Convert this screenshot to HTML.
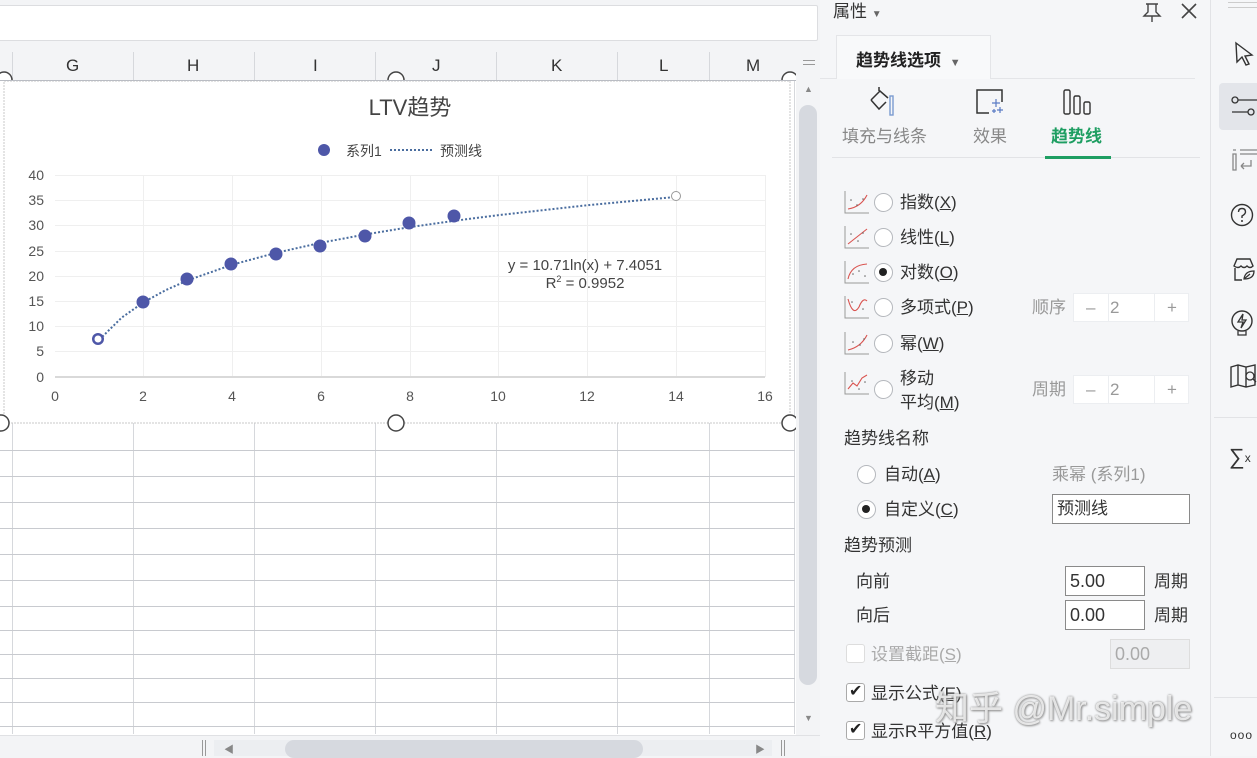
<!DOCTYPE html>
<html><head><meta charset="utf-8"><style>
*{margin:0;padding:0;box-sizing:border-box}
body{width:1257px;height:756px;overflow:hidden;background:#f3f4f6;font-family:"Liberation Sans","Noto Sans CJK SC",sans-serif;position:relative;color:#333}
.a{position:absolute;white-space:nowrap}
.t{font-size:17px;line-height:20px}
.g{color:#999}
.rad{position:absolute;width:19px;height:19px;border:1.5px solid #b5b8bd;border-radius:50%;background:#fff}
.rad.on::after{content:"";position:absolute;left:4px;top:4px;width:8px;height:8px;border-radius:50%;background:#222}
.spin{position:absolute;width:116px;height:29px;background:#fff;border:1px solid #eceef1;font-size:17px;color:#999}
.spin span{position:absolute;top:4px}
.inp{position:absolute;background:#fff;border:1px solid #8a8a8a;font-size:18px;padding:3px 4px;line-height:22px}
.chk{position:absolute;width:19px;height:19px;border:1.5px solid #aaa;border-radius:3px;background:#fff}
</style></head><body>
<!-- formula bar -->
<div class="a" style="left:-2px;top:5px;width:820px;height:36px;background:#fff;border:1px solid #dcdde0;border-radius:2px"></div>
<!-- grid -->
<div class="a" style="left:0;top:80px;width:796px;height:655px;background:#fff"></div>
<svg class="a" style="left:0;top:52px" width="800" height="684">
<g stroke="#d6d8dc" stroke-width="1">
<line x1="12.5" y1="0" x2="12.5" y2="682"/><line x1="133.5" y1="0" x2="133.5" y2="682"/><line x1="254.5" y1="0" x2="254.5" y2="682"/><line x1="375.5" y1="0" x2="375.5" y2="682"/><line x1="496.5" y1="0" x2="496.5" y2="682"/><line x1="617.5" y1="0" x2="617.5" y2="682"/><line x1="709.5" y1="0" x2="709.5" y2="682"/><line x1="794.5" y1="0" x2="794.5" y2="682"/>
</g>
<g stroke="#c8cacf" stroke-width="1">
<line x1="0" y1="398.5" x2="795" y2="398.5"/><line x1="0" y1="424.5" x2="795" y2="424.5"/><line x1="0" y1="450.5" x2="795" y2="450.5"/><line x1="0" y1="476.5" x2="795" y2="476.5"/><line x1="0" y1="502.5" x2="795" y2="502.5"/><line x1="0" y1="528.5" x2="795" y2="528.5"/><line x1="0" y1="554.5" x2="795" y2="554.5"/><line x1="0" y1="578.5" x2="795" y2="578.5"/><line x1="0" y1="602.5" x2="795" y2="602.5"/><line x1="0" y1="626.5" x2="795" y2="626.5"/><line x1="0" y1="650.5" x2="795" y2="650.5"/><line x1="0" y1="674.5" x2="795" y2="674.5"/>
</g>
</svg>
<!-- chart -->
<svg class="a" style="left:0;top:70px" width="800" height="370" viewBox="0 70 800 370">
<rect x="4" y="81" width="786" height="342" fill="#fff" stroke="#c9c9c9" stroke-dasharray="2 1"/>
<text x="410" y="115" font-size="22" fill="#444" text-anchor="middle" font-family="Liberation Sans,Noto Sans CJK SC,sans-serif">LTV趋势</text>
<circle cx="324" cy="150" r="6" fill="#4e57a8"/>
<text x="346" y="156" font-size="14" fill="#444" font-family="Liberation Sans,Noto Sans CJK SC,sans-serif">系列1</text>
<line x1="390" y1="150" x2="434" y2="150" stroke="#4a6d9f" stroke-width="2" stroke-dasharray="2 2"/>
<text x="440" y="156" font-size="14" fill="#444" font-family="Liberation Sans,Noto Sans CJK SC,sans-serif">预测线</text>
<g stroke="#efefef" stroke-width="1">
<line x1="55" y1="175.5" x2="765" y2="175.5"/><line x1="55" y1="200.5" x2="765" y2="200.5"/><line x1="55" y1="225.5" x2="765" y2="225.5"/><line x1="55" y1="251.5" x2="765" y2="251.5"/><line x1="55" y1="276.5" x2="765" y2="276.5"/><line x1="55" y1="301.5" x2="765" y2="301.5"/><line x1="55" y1="326.5" x2="765" y2="326.5"/><line x1="55" y1="351.5" x2="765" y2="351.5"/>
<line x1="143.5" y1="175" x2="143.5" y2="377"/><line x1="232.5" y1="175" x2="232.5" y2="377"/><line x1="321.5" y1="175" x2="321.5" y2="377"/><line x1="410.5" y1="175" x2="410.5" y2="377"/><line x1="498.5" y1="175" x2="498.5" y2="377"/><line x1="587.5" y1="175" x2="587.5" y2="377"/><line x1="676.5" y1="175" x2="676.5" y2="377"/><line x1="765.5" y1="175" x2="765.5" y2="377"/>
</g>
<line x1="55" y1="377" x2="765" y2="377" stroke="#d9d9d9" stroke-width="2"/>
<g font-size="14" fill="#555" font-family="Liberation Sans,sans-serif" text-anchor="end">
<text x="44" y="180">40</text><text x="44" y="205">35</text><text x="44" y="230">30</text><text x="44" y="256">25</text><text x="44" y="281">20</text><text x="44" y="306">15</text><text x="44" y="331">10</text><text x="44" y="356">5</text><text x="44" y="382">0</text>
</g>
<g font-size="14" fill="#555" font-family="Liberation Sans,sans-serif" text-anchor="middle">
<text x="55" y="401">0</text><text x="143" y="401">2</text><text x="232" y="401">4</text><text x="321" y="401">6</text><text x="410" y="401">8</text><text x="498" y="401">10</text><text x="587" y="401">12</text><text x="676" y="401">14</text><text x="765" y="401">16</text>
</g>
<path d="M99.4 339.6 L121.6 317.7 L143.75 302.1 L166 290 L188.1 280.2 L232.5 264.6 L276.9 252.6 L321.3 242.7 L365.6 234.4 L410 227.1 L454.4 220.8 L498.8 215.1 L587.5 205.2 L676.3 196.9" fill="none" stroke="#4a6d9f" stroke-width="2" stroke-dasharray="2 2"/>
<g fill="#4e57a8">
<circle cx="143" cy="302" r="6.5"/><circle cx="187" cy="279" r="6.5"/><circle cx="231" cy="264" r="6.5"/><circle cx="276" cy="254" r="6.5"/><circle cx="320" cy="246" r="6.5"/><circle cx="365" cy="236" r="6.5"/><circle cx="409" cy="223" r="6.5"/><circle cx="454" cy="216" r="6.5"/>
</g>
<circle cx="98" cy="339" r="6" fill="#4e57a8"/><circle cx="98" cy="339" r="3.5" fill="#fff"/>
<circle cx="676" cy="196" r="4.5" fill="#fff" stroke="#999"/>
<text x="585" y="270" font-size="15" fill="#444" text-anchor="middle" font-family="Liberation Sans,sans-serif">y = 10.71ln(x) + 7.4051</text>
<text x="585" y="288" font-size="15" fill="#444" text-anchor="middle" font-family="Liberation Sans,sans-serif">R<tspan dy="-6" font-size="9">2</tspan><tspan dy="6"> = 0.9952</tspan></text>
<g fill="#fff" stroke="#444" stroke-width="1.5">
<circle cx="396" cy="423" r="8"/><circle cx="1" cy="423" r="8"/><circle cx="790" cy="423" r="8"/>
</g>
</svg>
<!-- column header (over chart top) -->
<div class="a" style="left:0;top:52px;width:796px;height:28px;background:#f3f4f6"></div>
<svg class="a" style="left:0;top:52px" width="800" height="36"><g stroke="#d6d8dc"><line x1="12.5" y1="0" x2="12.5" y2="28"/><line x1="133.5" y1="0" x2="133.5" y2="28"/><line x1="254.5" y1="0" x2="254.5" y2="28"/><line x1="375.5" y1="0" x2="375.5" y2="28"/><line x1="496.5" y1="0" x2="496.5" y2="28"/><line x1="617.5" y1="0" x2="617.5" y2="28"/><line x1="709.5" y1="0" x2="709.5" y2="28"/></g><line x1="0" y1="28.5" x2="796" y2="28.5" stroke="#b9bcc3"/>
<g fill="#fff" stroke="#444" stroke-width="1.5"><path d="M-4 28 A8 8 0 0 1 12 28"/><path d="M388 28 A8 8 0 0 1 404 28"/><path d="M782 28 A8 8 0 0 1 798 28"/></g></svg>
<div class="a" style="left:0;top:52px;width:796px;height:28px;font-size:17px;color:#333">
<span class="a" style="left:66px;top:4px">G</span><span class="a" style="left:187px;top:4px">H</span><span class="a" style="left:313px;top:4px">I</span><span class="a" style="left:432px;top:4px">J</span><span class="a" style="left:551px;top:4px">K</span><span class="a" style="left:659px;top:4px">L</span><span class="a" style="left:746px;top:4px">M</span>
</div>
<!-- vertical scrollbar -->
<div class="a" style="left:796px;top:52px;width:24px;height:684px;background:#f3f4f6"></div>
<div class="a" style="left:803px;top:60px;width:12px;height:5px;border-top:1px solid #999;border-bottom:1px solid #999"></div>
<div class="a" style="left:804px;top:84px;font-size:9px;color:#888">▲</div>
<div class="a" style="left:799px;top:105px;width:18px;height:580px;background:#d6d9df;border-radius:9px"></div>
<div class="a" style="left:804px;top:713px;font-size:9px;color:#888">▼</div>
<!-- bottom bar -->
<div class="a" style="left:0;top:735px;width:820px;height:21px;background:#f3f4f6;border-top:1px solid #e0e1e4"></div>
<div class="a" style="left:202px;top:740px;width:4px;height:16px;border-left:1px solid #999;border-right:1px solid #999"></div>
<div class="a" style="left:214px;top:740px;width:558px;height:16px;background:#eceef1"></div>
<div class="a" style="left:285px;top:740px;width:358px;height:18px;background:#d6d9df;border-radius:9px"></div>
<div class="a" style="left:224px;top:741px;font-size:10px;color:#888">◀</div>
<div class="a" style="left:755px;top:741px;font-size:10px;color:#888">▶</div>
<div class="a" style="left:781px;top:740px;width:4px;height:16px;border-left:1px solid #999;border-right:1px solid #999"></div>

<!-- right panel -->
<div class="a" style="left:820px;top:0;width:390px;height:756px;background:#f5f6f8"></div>
<div class="a t" style="left:833px;top:2px">属性 <span style="font-size:10px;color:#666">▼</span></div>
<svg class="a" style="left:1140px;top:0" width="60" height="24"><path d="M6 4 H18 M8 4 L8 12 L4 16 H20 L16 12 L16 4 M12 16 V22" fill="none" stroke="#444" stroke-width="1.4"/><path d="M42 4 L56 18 M56 4 L42 18" stroke="#444" stroke-width="1.6"/></svg>
<div class="a" style="left:836px;top:35px;width:155px;height:44px;background:#f8f9fa;border:1px solid #e4e5e8;border-bottom:none"></div>
<div class="a" style="left:820px;top:78px;width:16px;border-top:1px solid #e4e5e8"></div>
<div class="a" style="left:990px;top:78px;width:205px;border-top:1px solid #e4e5e8"></div>
<div class="a" style="left:856px;top:46px;font-size:17px;font-weight:bold;color:#222">趋势线选项 <span style="font-size:11px;color:#666;margin-left:4px">▼</span></div>
<svg class="a" style="left:866px;top:86px" width="40" height="32"><path d="M5 14 L14 5 L22 12 M5 14 L13 23 L20 16" fill="none" stroke="#333" stroke-width="1.5"/><path d="M13 5 V1" stroke="#333" stroke-width="1.5"/><rect x="24" y="10" width="3" height="19" fill="none" stroke="#7a9bd0" stroke-width="1.4"/></svg>
<svg class="a" style="left:975px;top:88px" width="34" height="28"><path d="M27 14 V2 H2 V25 H14" fill="none" stroke="#333" stroke-width="1.5"/><path d="M21 11 v8 M17 15 h8 M25 19 v6 M22 22 h6 M19 21 v4 M17 23 h4" stroke="#5a7bc4" stroke-width="1.2"/></svg>
<svg class="a" style="left:1062px;top:88px" width="34" height="28"><rect x="2" y="2" width="6" height="24" rx="1.5" fill="none" stroke="#333" stroke-width="1.4"/><rect x="12" y="8" width="6" height="18" rx="1.5" fill="none" stroke="#333" stroke-width="1.4"/><rect x="22" y="14" width="6" height="12" rx="1.5" fill="none" stroke="#333" stroke-width="1.4"/></svg>
<div class="a t" style="left:842px;top:127px;color:#888">填充与线条</div>
<div class="a t" style="left:973px;top:127px;color:#888">效果</div>
<div class="a t" style="left:1051px;top:127px;color:#1e9e62;font-weight:bold">趋势线</div>
<div class="a" style="left:832px;top:157px;width:368px;border-top:1px solid #e2e3e6"></div>
<div class="a" style="left:1045px;top:156px;width:66px;height:3px;background:#1e9e62"></div>

<!-- option rows -->
<svg class="a" style="left:843px;top:189px" width="28" height="225">
<g fill="none" stroke="#999" stroke-width="1"><path d="M2 2 V24 H26"/><path d="M2 37 V59 H26"/><path d="M2 72 V94 H26"/><path d="M2 107 V129 H26"/><path d="M2 143 V165 H26"/><path d="M2 183 V205 H26"/></g>
<g fill="none" stroke="#d9534f" stroke-width="1.1"><path d="M5 20 Q18 18 24 6"/><path d="M5 55 L24 40"/><path d="M5 90 Q8 76 24 75"/><path d="M5 110 Q10 128 16 118 Q20 108 24 112"/><path d="M5 161 Q18 158 24 146"/><path d="M5 200 L10 194 L14 197 L19 189 L24 186"/></g>
<g fill="#666"><circle cx="8" cy="11" r=".8"/><circle cx="14" cy="16" r=".8"/><circle cx="20" cy="10" r=".8"/><circle cx="8" cy="45" r=".8"/><circle cx="15" cy="52" r=".8"/><circle cx="20" cy="44" r=".8"/><circle cx="10" cy="85" r=".8"/><circle cx="16" cy="82" r=".8"/><circle cx="22" cy="87" r=".8"/><circle cx="9" cy="113" r=".8"/><circle cx="20" cy="120" r=".8"/><circle cx="10" cy="153" r=".8"/><circle cx="17" cy="156" r=".8"/><circle cx="21" cy="150" r=".8"/><circle cx="9" cy="192" r=".8"/><circle cx="16" cy="200" r=".8"/><circle cx="22" cy="193" r=".8"/></g>
</svg>
<div class="rad" style="left:874px;top:193px"></div><div class="a t" style="left:900px;top:193px">指数(<u>X</u>)</div>
<div class="rad" style="left:874px;top:228px"></div><div class="a t" style="left:900px;top:228px">线性(<u>L</u>)</div>
<div class="rad on" style="left:874px;top:263px"></div><div class="a t" style="left:900px;top:263px">对数(<u>O</u>)</div>
<div class="rad" style="left:874px;top:298px"></div><div class="a t" style="left:900px;top:298px">多项式(<u>P</u>)</div>
<div class="rad" style="left:874px;top:334px"></div><div class="a t" style="left:900px;top:334px">幂(<u>W</u>)</div>
<div class="rad" style="left:874px;top:380px"></div><div class="a t" style="left:900px;top:369px">移动</div><div class="a t" style="left:900px;top:393px">平均(<u>M</u>)</div>
<div class="a t g" style="left:1032px;top:298px">顺序</div>
<div class="spin" style="left:1073px;top:293px"><span style="left:12px">–</span><span style="left:36px">2</span><span style="left:93px">+</span><div class="a" style="left:34px;top:0;height:27px;border-left:1px solid #eceef1"></div><div class="a" style="left:80px;top:0;height:27px;border-left:1px solid #eceef1"></div></div>
<div class="a t g" style="left:1032px;top:380px">周期</div>
<div class="spin" style="left:1073px;top:375px"><span style="left:12px">–</span><span style="left:36px">2</span><span style="left:93px">+</span><div class="a" style="left:34px;top:0;height:27px;border-left:1px solid #eceef1"></div><div class="a" style="left:80px;top:0;height:27px;border-left:1px solid #eceef1"></div></div>

<div class="a t" style="left:844px;top:429px">趋势线名称</div>
<div class="rad" style="left:857px;top:465px"></div><div class="a t" style="left:884px;top:465px">自动(<u>A</u>)</div>
<div class="rad on" style="left:857px;top:500px"></div><div class="a t" style="left:884px;top:500px">自定义(<u>C</u>)</div>
<div class="a t g" style="left:1052px;top:465px">乘幂 (系列1)</div>
<div class="inp" style="left:1052px;top:494px;width:138px;height:30px;font-size:17px">预测线</div>
<div class="a t" style="left:844px;top:536px">趋势预测</div>
<div class="a t" style="left:856px;top:572px">向前</div>
<div class="inp" style="left:1065px;top:566px;width:80px;height:30px">5.00</div>
<div class="a t" style="left:1154px;top:572px">周期</div>
<div class="a t" style="left:856px;top:606px">向后</div>
<div class="inp" style="left:1065px;top:600px;width:80px;height:30px">0.00</div>
<div class="a t" style="left:1154px;top:606px">周期</div>
<div class="chk" style="left:846px;top:644px;border-color:#ddd"></div>
<div class="a t" style="left:871px;top:645px;color:#aaa">设置截距(<u>S</u>)</div>
<div class="inp" style="left:1110px;top:639px;width:80px;height:30px;background:#eeeff1;border-color:#ddd;color:#aaa">0.00</div>
<div class="chk" style="left:846px;top:683px"></div><div class="a" style="left:849px;top:681px;font-size:16px;color:#222">✔</div>
<div class="a t" style="left:871px;top:684px">显示公式(<u>E</u>)</div>
<div class="chk" style="left:846px;top:721px"></div><div class="a" style="left:849px;top:719px;font-size:16px;color:#222">✔</div>
<div class="a t" style="left:871px;top:722px">显示R平方值(<u>R</u>)</div>

<!-- right sidebar -->
<div class="a" style="left:1210px;top:0;width:47px;height:756px;background:#f5f6f8;border-left:1px solid #e2e3e6"></div>
<div class="a" style="left:1228px;top:2px;width:29px;height:6px;border-top:1px solid #ccc;border-bottom:1px solid #ccc"></div>
<svg class="a" style="left:1232px;top:40px" width="25" height="28"><path d="M4 3 L20 15 L13 16 L17 24 L14 25 L10 17 L5 22 Z" fill="none" stroke="#333" stroke-width="1.4"/></svg>
<div class="a" style="left:1219px;top:83px;width:38px;height:47px;background:#e3e5ea;border-radius:4px 0 0 4px"></div>
<svg class="a" style="left:1230px;top:95px" width="27" height="24"><circle cx="5" cy="5" r="3" fill="none" stroke="#333" stroke-width="1.3"/><path d="M8 5 H27 M2 17 H18" stroke="#333" stroke-width="1.3"/><circle cx="21" cy="17" r="3" fill="none" stroke="#333" stroke-width="1.3"/></svg>
<svg class="a" style="left:1231px;top:148px" width="26" height="26"><path d="M2 2 H5 M2 6 H5 V22 H2 Z M9 2 H26 M9 6 H26" fill="none" stroke="#888" stroke-width="1.3"/><path d="M10 18 H20 L20 12 M10 18 L13 15 M10 18 L13 21" fill="none" stroke="#888" stroke-width="1.3"/></svg>
<svg class="a" style="left:1230px;top:203px" width="26" height="26"><circle cx="12" cy="12" r="10.5" fill="none" stroke="#333" stroke-width="1.4"/><path d="M8.5 9 Q8.5 5.5 12 5.5 Q15.5 5.5 15.5 9 Q15.5 11 12 13 V15" fill="none" stroke="#333" stroke-width="1.4"/><circle cx="12" cy="18" r="1" fill="#333"/></svg>
<svg class="a" style="left:1230px;top:256px" width="27" height="26"><path d="M4 10 L7 3 H20 L23 10 Q20 13 17 10 Q14 13 11 10 Q8 13 4 10 Z M5 12 V24 H12" fill="none" stroke="#333" stroke-width="1.4"/><path d="M14 23 Q15 15 24 15 Q24 23 14 23 Z M14 23 L20 18" fill="none" stroke="#333" stroke-width="1.3"/></svg>
<svg class="a" style="left:1230px;top:309px" width="26" height="28"><circle cx="12" cy="12" r="10" fill="none" stroke="#333" stroke-width="1.4"/><path d="M13 5 L8 13 H13 L11 19 L16 11 H12 Z" fill="none" stroke="#333" stroke-width="1.3"/><path d="M8 22 V26 H16 V22" fill="none" stroke="#333" stroke-width="1.3"/></svg>
<svg class="a" style="left:1229px;top:363px" width="28" height="26"><path d="M2 4 L9 2 L17 4 L26 2 V22 L17 24 L9 22 L2 24 Z M9 2 V22 M17 4 V24" fill="none" stroke="#333" stroke-width="1.4"/><circle cx="21" cy="13" r="4" fill="#f5f6f8" stroke="#333" stroke-width="1.3"/><path d="M24 16 L27 19" stroke="#333" stroke-width="1.3"/></svg>
<div class="a" style="left:1214px;top:417px;width:43px;border-top:1px solid #e2e3e6"></div>
<div class="a" style="left:1229px;top:444px;font-size:22px;color:#333">∑<span style="font-size:12px;position:relative;top:-2px">x</span></div>
<div class="a" style="left:1214px;top:697px;width:43px;border-top:1px solid #e2e3e6"></div>
<div class="a" style="left:1230px;top:728px;font-size:12px;color:#333;letter-spacing:1px">ooo</div>
<!-- watermark -->
<div class="a" style="left:935px;top:681px;font-size:34px;color:rgba(255,255,255,0.75);text-shadow:0 0 2px #888,1px 1px 2px #999">知乎 @Mr.simple</div>
</body></html>
